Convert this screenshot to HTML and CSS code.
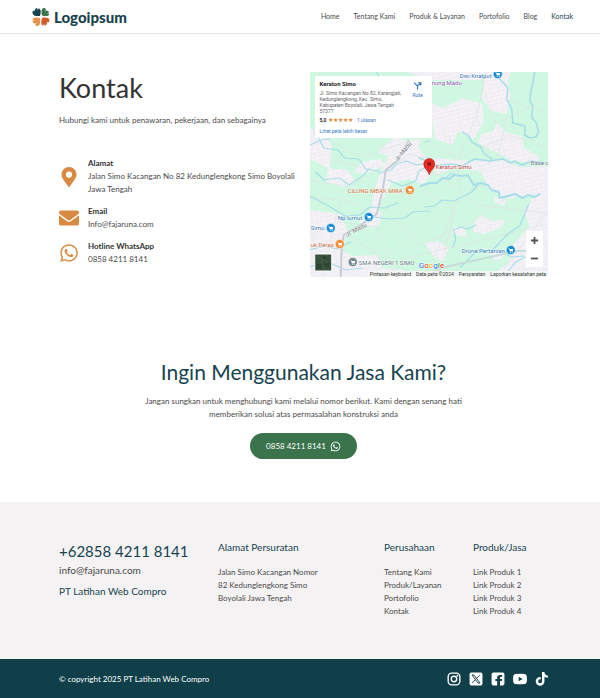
FILE: index.html
```html
<!DOCTYPE html>
<html lang="id">
<head>
<meta charset="utf-8">
<meta name="viewport" content="width=device-width, initial-scale=1">
<title>Kontak</title>
<link rel="stylesheet" href="styles.css">
</head>
<body>
<svg class="sprite" aria-hidden="true">
  <symbol id="whatsapp" viewBox="0 0 448 512"><path d="M380.900 97.100C339 55.100 283.200 32 223.900 32c-122.400 0-222 99.600-222 222 0 39.100 10.200 77.300 29.600 111L0 480l117.700-30.900c32.400 17.700 68.900 27 106.100 27h.1c122.300 0 224.100-99.600 224.100-222 0-59.300-25.200-115-67.100-157zM223.900 438.700c-33.200 0-65.700-8.900-94-25.700l-6.700-4-69.800 18.300L72 359.200l-4.400-7c-18.500-29.400-28.200-63.300-28.200-98.200 0-101.700 82.800-184.500 184.600-184.500 49.300 0 95.600 19.200 130.400 54.100 34.800 34.900 56.200 81.200 56.100 130.500 0 101.800-84.900 184.600-186.600 184.600zm101.200-138.200c-5.500-2.800-32.800-16.200-37.900-18-5.100-1.900-8.800-2.800-12.500 2.800-3.700 5.600-14.300 18-17.600 21.800-3.200 3.700-6.500 4.200-12 1.400-32.600-16.300-54-29.100-75.500-66-5.700-9.800 5.700-9.100 16.300-30.300 1.800-3.700.9-6.900-.5-9.700-1.400-2.800-12.500-30.100-17.100-41.200-4.500-10.800-9.100-9.300-12.500-9.500-3.200-.2-6.900-.2-10.600-.2-3.700 0-9.700 1.400-14.800 6.900-5.100 5.600-19.400 19-19.400 46.300 0 27.300 19.900 53.700 22.600 57.400 2.800 3.700 39.100 59.700 94.800 83.800 35.200 15.200 49 16.500 66.600 13.900 10.700-1.600 32.800-13.400 37.400-26.400 4.600-13 4.600-24.100 3.200-26.400-1.300-2.500-5-3.900-10.500-6.600z"/></symbol>
</svg>

<header class="site-header">
  <a class="logo" href="#">
    <svg class="logo-mark" viewBox="0 0 36 40" aria-hidden="true">
      <path fill="#17434f" d="M16 18C7 19 1 17 1 11c0-3 2-4 4-4l2 2-1-3c0-3 3-4 5-3l1 4 1-4c4 0 6 5 3 15z"/>
      <path fill="#3b7650" d="M20 17c-2-7-1-16 4-15 3 0 4 2 4 4l-2 3 3-2c3 0 5 2 5 4l-4 2h4c2 4-4 7-14 4z"/>
      <path fill="#e6944d" d="M16 22c1 8 0 17-5 16-3 0-5-2-4-4l2-3-3 2c-3 0-5-2-5-4l4-2H1c-1-5 6-8 15-5z"/>
      <path fill="#cf6029" d="M20 22c7-2 15-1 15 5 0 3-2 4-4 4l-2-2 1 3c0 3-2 6-5 5l-1-4-1 4c-4 0-6-5-3-15z"/>
    </svg>
    <span>Logoipsum</span>
  </a>
  <nav class="nav" aria-label="Menu utama">
    <a href="#">Home</a><a href="#">Tentang Kami</a><a href="#">Produk &amp; Layanan</a><a href="#">Portofolio</a><a href="#">Blog</a><a class="active" href="#">Kontak</a>
  </nav>
</header>

<main>
  <section class="contact">
    <div>
      <h1>Kontak</h1>
      <p class="intro">Hubungi kami untuk penawaran, pekerjaan, dan sebagainya</p>
      <ul class="contact-list">
        <li>
          <svg viewBox="0 0 384 512" aria-hidden="true"><path d="M192 0C86 0 0 86 0 192c0 77 27 99 172 310 10 14 30 14 40 0 145-211 172-233 172-310C384 86 298 0 192 0zm0 272a80 80 0 1 1 0-160 80 80 0 0 1 0 160z"/></svg>
          <div><strong>Alamat</strong><p>Jalan Simo Kacangan No 82 Kedunglengkong Simo Boyolali Jawa Tengah</p></div>
        </li>
        <li>
          <svg viewBox="0 64 512 384" aria-hidden="true"><path d="M502 191c4-3 10 0 10 5v204c0 27-21 48-48 48H48c-27 0-48-21-48-48V196c0-5 6-8 10-5 22 17 52 40 155 114 21 16 57 48 91 48s70-33 91-48c103-74 133-97 155-114zM256 320c23 0 57-30 74-42 133-96 143-105 174-129 5-5 8-11 8-18v-19c0-27-21-48-48-48H48C21 64 0 85 0 112v19c0 7 3 13 9 18 30 24 40 33 173 129 17 12 51 42 74 42z"/></svg>
          <div><strong>Email</strong><p>Info@fajaruna.com</p></div>
        </li>
        <li>
          <svg aria-hidden="true"><use href="#whatsapp"/></svg>
          <div><strong>Hotline WhatsApp</strong><p>0858 4211 8141</p></div>
        </li>
      </ul>
    </div>

    <div class="map">
      <svg class="map-canvas" viewBox="310 72 239 205" preserveAspectRatio="xMidYMid slice" role="img" aria-label="Peta lokasi Keraton Simo">
        <defs>
          <pattern id="blocks" width="9" height="8" patternUnits="userSpaceOnUse" patternTransform="rotate(-14)">
            <path fill="#f5f3f7" d="M0 0h9v8H0z"/><path fill="none" stroke="#e3e3ea" stroke-width=".5" d="M0 1h9M3 1v7M7 1v4M0 5h9"/>
          </pattern>
          <symbol id="bag" viewBox="0 0 10 10"><circle cx="5" cy="5" r="4.500" fill="currentColor" stroke="#fff" stroke-width=".5"/><path fill="#fff" d="M2.500 3h1l.4 1H7.500L7 6.300H4L3.300 3.600H2.500zM4 6.800h1v1H4zM6 6.800h1v1H6z"/></symbol>
        </defs>
        <path fill="#cff7e1" d="M310 72h239v205H310z"/>
        <g fill="url(#blocks)">
          <path d="M486 72h25l-3 10 3 13-4 19-15-3-10-12zM463 98l20 6 1 18-10 17-16-8-5 14-18-6-5-37 13 6zM497 122l9 10 16 4 2 12 16 9-3 6-25-2-8-5-26-13 4-9 12-3z"/>
          <path d="M435 158l35 3 37-1 12 7 30-1v32l-19-3-22 4-20-12-7-15-24-5-22 8zM407 72l80 0-6 8-50 0zM310 128l15 5 7 14-2 22-20-10zM328 168l20 2 8 12-12 5-17-5z"/>
          <path d="M395 137l13 4 13-2-2 9 11 15 1 13-8 8-14-5-17 4-12 21-3 10-6-3 5-25 5-14 8-16-12-4 9-7z"/>
          <path d="M310 210l31 4 7 18-6 18 12 6 24-1 3 13 22 2v7h-93zM374 206l8 6-2 12-7 4-14-6zM362 162l18-3 6 6-20 9-12-2z"/>
          <path d="M455 226l10 3 2 8-9-2-6-2zM474 223l7-8 11 6 13-1-3 7-18 7-10-2zM425 243l13-2 11 7-5 14-9-4zM494 196l12 4-1 6-10-4zM549 193l-16 5-9 13 6 15-16 18-6 20-9 6 5 7h45zM489 252l17-4-2 9-9 4z"/>
        </g>
        <g fill="none" stroke="#dfe5e6" stroke-width=".7">
          <path d="M321 72l-7 64M327 139l35 19 47-17M332 160l51 13 26-19 22 5M423 138l36 20 51-23 38 12M486 72l-8 40-19 48M508 114l-10 43-32 20M509 100l39 13M449 135l12 50-22 92M445 216l32-31 20 6M310 198l36 2 35 16M310 236l30-14 38 5 18 49M347 179l-12 43-12 54M345 234l46 28 158-38M392 220l28 25 54-24 36-25M420 188l34 21-20 48M549 210l-50 66M310 180l42 7 23-23M479 72l17 52 53-27M429 168l49 37 71 8"/>
        </g>
        <g fill="none" stroke="#a7ddea" stroke-width="1.200" stroke-linejoin="round" stroke-linecap="round">
          <path d="M319 138l5 10 14 2 7 8 14 1 7 10 13 2M310 145l12-5 8-1M379 173l12-3 6-6 10-3 10 4 13-2M388 180l15 6 13-5 3-10 8-4M377 72l4 9M310 196l19 10 16 10 15-1 10-8 15 1 13-5M373 217l16 2 16-1 8-6 17-1M316 172l8 8 16-2 9 7 14-9 6-7M310 250l15-4 12 3 14-7M310 267l18-5 18 8 17-2"/>
          <path stroke-width="1.500" d="M497 72l3 7 8 9-1 11 5 10 1 14 8 2 4 1v9l5 3 6-1 3-5-3-10-4-4 1-12-3-5 1-9 2-9 2-11M463 132l6 4 3 6 9 5 3 6 8 6M419 158l6 2 8 6 18-2 11 2 13-7 15 2 13-2 8 4 4-2 7 4 10-4 14 2"/>
          <path stroke-width="2" d="M421 186l9-3 7 0 6-5 7 1 4-4 8 1 6-1 3 5 3 5 7-2 7 2 4 5 7 2 1 6 8-2 7-2 8 4 5-3 7 2 5-3"/>
          <path d="M425 207l10-1 7-6 12 1 8-4 10-5 6-7M453 247l3-8-2-9 6-3 8 2 8-4M461 267l16-16 16-1 15-16 12-8 9-22M504 277l11-14 10-6M503 252l9 5 12-1M447 178l3-4 5 0M425 142l5-1"/>
        </g>
        <g fill="none" stroke-linecap="round">
          <path stroke="#c8cdd5" stroke-width="2" d="M409 141l-12 20-11 9-3 20-6 24-18 12-15 9-2 12-1 30"/>
          <path stroke="#c6dcda" stroke-width="2" d="M421 277l20-9 76-17 12 0"/>
        </g>
        <g class="map-labels">
          <g fill="#747681"><text x="347" y="237" transform="rotate(-28 347 237)">Jl. Madu</text><text x="398" y="162" transform="rotate(-52 398 162)">Jl. Madu</text></g>
          <g fill="#9655b5"><text x="432" y="85">nung Madu</text></g>
          <g fill="#397db8"><text x="460" y="78">Dwi Knalpot</text><text x="338" y="220">Np lumut</text><text x="311" y="230">Simo</text><text x="462" y="253">Drone Pertanian</text></g>
          <g fill="#d06d35"><text x="348" y="193">CILUNG MBAK MIRA</text><text x="311" y="247">uk Peras</text></g>
          <g fill="#697a88"><text x="359" y="265">SMA NEGERI 1 SIMO</text><text x="531" y="165">Base c</text></g>
          <text fill="#b7443c" x="436" y="169">Keraton Simo</text>
        </g>
        <g color="#168bd3"><use href="#bag" x="493" y="69" width="10" height="10"/><use href="#bag" x="364" y="212" width="10" height="10"/><use href="#bag" x="326" y="223" width="10" height="10"/><use href="#bag" x="506" y="245" width="10" height="10"/></g>
        <g color="#f48b32"><use href="#bag" x="405" y="185" width="10" height="10"/><use href="#bag" x="335" y="239" width="10" height="10"/></g>
        <g color="#71838e"><use href="#bag" x="348" y="257" width="10" height="10"/></g>
        <path fill="#e52b25" stroke="#b31412" stroke-width=".5" d="M429.500 175c-1-5-5.500-6-5.500-11a5.500 5.500 0 0 1 11 0c0 5-4.500 6-5.500 11z"/><circle cx="429.500" cy="164" r="2" fill="#8d1715"/>
        <path fill="#374f3b" stroke="#fff" d="M315 254h17v17h-17z"/><path fill="none" stroke="#6c7150" stroke-width=".5" d="M317 256l6 4-2 5 5 5M328 255l-3 5 5 5"/><path fill="#2c4835" d="M323 256h4v3h-4zM317 264h5v5h-5zM325 263h5v4h-5z"/>
        <text class="google" x="419" y="268"><tspan fill="#4285f4">G</tspan><tspan fill="#ea4335">o</tspan><tspan fill="#fbbc05">o</tspan><tspan fill="#4285f4">g</tspan><tspan fill="#34a853">l</tspan><tspan fill="#ea4335">e</tspan></text>
      </svg>
      <div class="place-card">
        <div>
          <strong>Keraton Simo</strong>
          <p>Jl. Simo Kacangan No.82, Karangjati, Kedunglengkong, Kec. Simo, Kabupaten Boyolali, Jawa Tengah 57377</p>
          <div class="rating"><b>5,0</b> <span>★★★★★</span> <a href="#">1 ulasan</a></div>
          <a href="#">Lihat peta lebih besar</a>
        </div>
        <a class="route" href="#"><svg viewBox="0 0 16 16" aria-hidden="true"><path fill="none" stroke="currentColor" stroke-width="2" d="M8 15V9L2 3M8 9l5-5M9 3h5v5"/></svg>Rute</a>
      </div>
      <div class="zoom"><button type="button" aria-label="Perbesar"><svg viewBox="0 0 10 10"><path d="M1 5h8M5 1v8"/></svg></button><button type="button" aria-label="Perkecil"><svg viewBox="0 0 10 10"><path d="M1 5h8"/></svg></button></div>
      <div class="map-credit"><span>Pintasan keyboard</span><span>Data peta ©2024</span><span>Persyaratan</span><span>Laporkan kesalahan peta</span></div>
    </div>
  </section>

  <section class="cta">
    <h2>Ingin Menggunakan Jasa Kami?</h2>
    <p>Jangan sungkan untuk menghubungi kami melalui nomor berikut. Kami dengan senang hati memberikan solusi atas permasalahan konstruksi anda</p>
    <a class="cta-button" href="#">0858 4211 8141 <svg aria-hidden="true"><use href="#whatsapp"/></svg></a>
  </section>
</main>

<footer>
  <div class="footer-main">
    <div>
      <p class="phone">+62858 4211 8141</p>
      <p class="mail">info@fajaruna.com</p>
      <p class="company">PT Latihan Web Compro</p>
    </div>
    <div><h3>Alamat Persuratan</h3><p class="address">Jalan Simo Kacangan Nomor 82 Kedunglengkong Simo Boyolali Jawa Tengah</p></div>
    <div><h3>Perusahaan</h3><ul><li><a href="#">Tentang Kami</a></li><li><a href="#">Produk/Layanan</a></li><li><a href="#">Portofolio</a></li><li><a href="#">Kontak</a></li></ul></div>
    <div><h3>Produk/Jasa</h3><ul><li><a href="#">Link Produk 1</a></li><li><a href="#">Link Produk 2</a></li><li><a href="#">Link Produk 3</a></li><li><a href="#">Link Produk 4</a></li></ul></div>
  </div>
  <div class="footer-bar">
    <p>© copyright 2025 PT Latihan Web Compro</p>
    <div class="social">
      <a href="#" aria-label="Instagram"><svg viewBox="0 0 24 24"><g fill="none" stroke="currentColor" stroke-width="2.300"><rect x="2" y="2" width="20" height="20" rx="6"/><circle cx="12" cy="12" r="4.700"/></g><circle cx="17.700" cy="6.300" r="1.500"/></svg></a>
      <a href="#" aria-label="X"><svg viewBox="0 0 24 24"><rect x="1" y="1" width="22" height="22" rx="3"/><path fill="none" stroke="#113f49" stroke-width="1.600" d="M5 5h3.500L19 19h-3.500zM18.500 5l-6 6.500M5.500 19l6-6.500"/></svg></a>
      <a href="#" aria-label="Facebook"><svg viewBox="0 0 24 24"><path d="M4 1h16a3 3 0 0 1 3 3v16a3 3 0 0 1-3 3h-4.500v-7.500h3l.6-3.500h-3.600v-2c0-1 .6-1.800 2-1.800h1.700V5.300S16.700 5 15.300 5c-3 0-4.700 1.700-4.700 4.800V12H7.500v3.500h3.100V23H4a3 3 0 0 1-3-3V4a3 3 0 0 1 3-3z"/></svg></a>
      <a href="#" aria-label="YouTube"><svg viewBox="0 0 24 24"><path fill-rule="evenodd" d="M4 3.500q8-1 16 0 3 .5 3.500 3.500.8 5 0 10-.5 3-3.500 3.500-8 1-16 0-3-.5-3.500-3.500-.8-5 0-10Q1 4 4 3.500zM9.700 8v8l6.800-4z"/></svg></a>
      <a href="#" aria-label="TikTok"><svg viewBox="0 0 24 24"><path d="M22 10a10 10 0 0 1-5.800-1.800V16A7.500 7.500 0 1 1 9.700 8.600v4.200A3.300 3.300 0 1 0 12 16V0h4.200A6 6 0 0 0 22 5.800z"/></svg></a>
    </div>
  </div>
</footer>
</body>
</html>
```
FILE: styles.css
```css
* { box-sizing: border-box; }
body { margin: 0; background: #fff; color: #4a4a4a; font: 8px/13px Lato, "Open Sans", sans-serif; }
h1, h2, h3, p, ul { margin: 0; padding: 0; font-weight: 400; }
ul { list-style: none; }
a { color: inherit; text-decoration: none; }
svg { display: block; fill: currentColor; }
.sprite { position: absolute; width: 0; height: 0; }

.site-header { display: flex; align-items: center; justify-content: space-between; height: 34px; padding: 0 27px 0 32px; border-bottom: 1px solid #e2e2e2; }
.logo { display: flex; align-items: center; gap: 4px; color: #17434f; font-size: 15px; font-weight: 900; line-height: 20px; }
.logo-mark { width: 18px; height: 20px; }
.nav { display: flex; gap: 14px; font-size: 7px; }
.nav .active { color: #17434f; }

.contact { display: grid; grid-template-columns: 1fr 1fr; gap: 12px; padding: 38px 52px 0 59px; }
h1 { color: #333; font-size: 27px; line-height: 32px; }
.intro { margin-top: 10px; }
.contact-list { display: grid; gap: 9px; margin-top: 30px; }
.contact-list li { display: grid; grid-template-columns: 20px 1fr; gap: 9px; align-items: center; }
.contact-list svg { width: 20px; height: 20px; color: #d88a43; }
.contact-list strong { display: block; color: #333; }

.map { position: relative; height: 205px; overflow: hidden; font-family: Roboto, sans-serif; }
.map-canvas { width: 100%; height: 100%; }
.map-labels { font-size: 6px; paint-order: stroke; stroke: #fff; stroke-width: 1px; stroke-opacity: .7; }
.google { font-size: 8px; font-weight: 500; paint-order: stroke; stroke: #fff; stroke-width: 1px; }
.place-card { position: absolute; top: 4px; left: 5px; display: flex; justify-content: space-between; width: 117px; height: 62px; padding: 5px 5px 0; background: #fff; color: #666; font-size: 5px; line-height: 6px; }
.place-card > div { width: 86px; }
.place-card strong { display: block; margin-bottom: 3px; color: #222; font-size: 6px; }
.place-card a { color: #3977c8; }
.rating { margin: 3px 0 5px; color: #333; }
.rating span { margin-right: 3px; color: #e38630; font-size: 6px; }
.place-card .route { width: 18px; text-align: center; }
.route svg { width: 9px; height: 9px; margin: 0 auto 2px; }
.zoom { position: absolute; right: 5px; bottom: 10px; display: grid; background: #fff; }
.zoom button { display: grid; place-items: center; width: 17px; height: 18px; padding: 0; border: 0; background: #fff; }
.zoom svg { width: 9px; height: 9px; fill: none; stroke: #555; stroke-width: 2px; }
.map-credit { position: absolute; right: 0; bottom: 0; display: flex; gap: 5px; padding: 0 2px; background: #f4f7f5; color: #333; font-size: 5px; line-height: 6px; }

.cta { display: flex; flex-direction: column; align-items: center; padding: 80px 52px 43px 59px; text-align: center; }
h2 { color: #17434f; font-size: 21px; line-height: 30px; }
.cta p { max-width: 325px; margin-top: 8px; }
.cta-button { display: flex; align-items: center; gap: 4px; height: 26px; margin-top: 12px; padding: 0 16px; border-radius: 13px; background: #3a734c; color: #fff; }
.cta-button svg { width: 11px; height: 11px; }

.footer-main { display: grid; grid-template-columns: 159px 166px 89px 1fr; min-height: 157px; padding: 38px 52px 0 59px; background: #f4f2f3; }
.phone { color: #17434f; font-size: 15px; line-height: 22px; }
.mail { font-size: 10px; line-height: 16px; }
.company { margin-top: 5px; color: #17434f; font-size: 10px; line-height: 16px; }
h3 { margin-bottom: 12px; color: #17434f; font-size: 10px; line-height: 14px; }
.address { max-width: 100px; }
.footer-bar { display: flex; align-items: center; justify-content: space-between; height: 40px; padding: 0 51px 0 59px; background: #113f49; color: #fff; }
.social { display: flex; gap: 8px; }
.social svg { width: 14px; height: 14px; }
```
